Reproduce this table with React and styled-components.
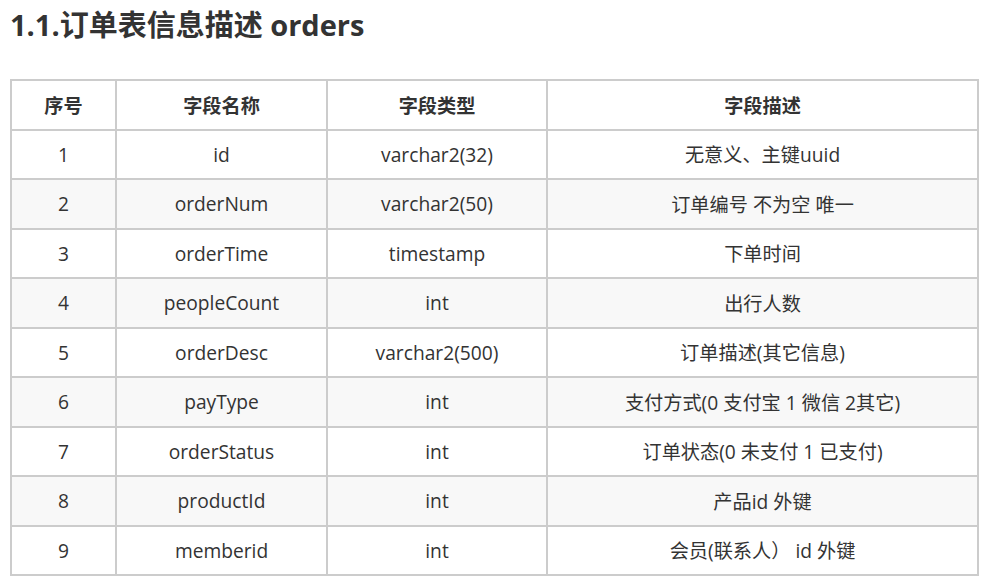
import React from 'react'
import styled, { createGlobalStyle } from 'styled-components'

const GlobalStyle = createGlobalStyle`
  html, body {
    margin: 0;
    padding: 0;
    background: #fff;
  }
  body {
    font-family: "Open Sans", "Noto Sans CJK SC", sans-serif;
    color: #333;
  }
`

const Page = styled.div`
  padding: 7px 10px 0 10px;
`

const Title = styled.h2`
  margin: 0;
  font-size: 29px;
  line-height: 36px;
  font-weight: 700;
  color: #333;
`

const Table = styled.table`
  margin-top: 36px;
  width: 967px;
  border-collapse: collapse;
  table-layout: fixed;
  border: 2px solid #ccc;
  font-size: 19.2px;
`

const Row = styled.tr`
  background: ${p => (p.$striped ? '#f8f8f8' : '#fff')};
`

const HeadCell = styled.th`
  border: 2px solid #ccc;
  height: 47.5px;
  padding: 0 10px;
  text-align: center;
  font-weight: 700;
  color: #333;
`

const Cell = styled.td`
  border: 2px solid #ccc;
  height: 47.5px;
  padding: 0 10px;
  text-align: center;
  color: #333;
`

const rows = [
  ['1', 'id', 'varchar2(32)', '无意义、主键uuid'],
  ['2', 'orderNum', 'varchar2(50)', '订单编号 不为空 唯一'],
  ['3', 'orderTime', 'timestamp', '下单时间'],
  ['4', 'peopleCount', 'int', '出行人数'],
  ['5', 'orderDesc', 'varchar2(500)', '订单描述(其它信息)'],
  ['6', 'payType', 'int', '支付方式(0 支付宝 1 微信 2其它)'],
  ['7', 'orderStatus', 'int', '订单状态(0 未支付 1 已支付)'],
  ['8', 'productId', 'int', '产品id 外键'],
  ['9', 'memberid', 'int', '会员(联系人） id 外键'],
]

const App = () => {
  return (
    <Page>
      <GlobalStyle />
      <Title>1.1.订单表信息描述 orders</Title>
      <Table>
        <colgroup>
          <col style={{ width: 105 }} />
          <col style={{ width: 211 }} />
          <col style={{ width: 220 }} />
          <col style={{ width: 431 }} />
        </colgroup>
        <thead>
          <Row>
            <HeadCell>序号</HeadCell>
            <HeadCell>字段名称</HeadCell>
            <HeadCell>字段类型</HeadCell>
            <HeadCell>字段描述</HeadCell>
          </Row>
        </thead>
        <tbody>
          {rows.map((r, i) => (
            <Row key={r[0]} $striped={i % 2 === 1}>
              {r.map((c, j) => (
                <Cell key={j}>{c}</Cell>
              ))}
            </Row>
          ))}
        </tbody>
      </Table>
    </Page>
  )
}

export default App
